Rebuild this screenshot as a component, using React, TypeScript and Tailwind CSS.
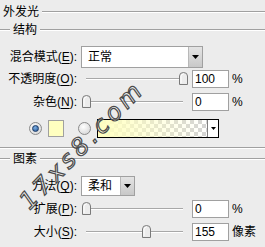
import React from 'react';

const font = "font-['Liberation_Sans','Noto_Sans_CJK_SC',sans-serif]";

function Etched() {
	return (
		<div className="flex-1 flex flex-col">
			<div className="h-px bg-[#a0a0a0]" />
			<div className="h-px bg-white" />
		</div>
	);
}

function GroupTitle({ text, big }: { text: string; big?: boolean }) {
	return (
		<div className={big ? 'h-[24px] flex items-center' : 'h-[12px] flex items-center'}>
			{!big && <div className="w-[10px] flex flex-col"><div className="h-px bg-[#a0a0a0]" /><div className="h-px bg-white" /></div>}
			<span className={big ? 'pl-[3px] pr-[3px]' : 'px-[3px]'}>{text}</span>
			<Etched />
		</div>
	);
}

function Label({ text, k }: { text: string; k: string }) {
	return (
		<span className="w-[77px] text-right whitespace-nowrap shrink-0">
			{text}(<span className="underline underline-offset-2">{k}</span>):
		</span>
	);
}

function DropButton() {
	return (
		<div className="w-[14px] h-full border-l border-[#b8b8b8] bg-[linear-gradient(#e4e4e4,#c8c8c8)] flex items-center justify-center">
			<svg width="7" height="4" viewBox="0 0 7 4">
				<path d="M0 0H7L3.5 4Z" fill="#000" />
			</svg>
		</div>
	);
}

function Select({ value, width }: { value: string; width: string }) {
	return (
		<div className={`${width} h-full ml-[4px] bg-white border border-[#a0a0a0] flex items-stretch`}>
			<span className="flex-1 pl-[6px] flex items-center">{value}</span>
			<DropButton />
		</div>
	);
}

function Slider({ pct }: { pct: number }) {
	return (
		<div className="relative w-[106px] h-full ml-[5px] shrink-0">
			<div className="absolute left-[4px] right-[5px] top-[8px] flex flex-col">
				<div className="h-px bg-[#a8a8a8]" />
				<div className="h-px bg-white" />
			</div>
			<svg
				className="absolute top-[2px]"
				style={{ left: 4 + pct * 97 - 4.5 }}
				width="9"
				height="13"
				viewBox="0 0 9 13"
			>
				<path d="M0.5 12.5V4Q0.5 0.5 4.5 0.5Q8.5 0.5 8.5 4V12.5Z" fill="#ececec" stroke="#7a7a7a" />
				<path d="M2 11V4.5Q2 2 4.5 2" fill="none" stroke="#fff" />
			</svg>
		</div>
	);
}

function NumBox({ value }: { value: string }) {
	return (
		<div className="w-[37px] h-full ml-[4px] bg-white border border-[#a0a0a0] flex items-center pl-[2px] shrink-0">
			{value}
		</div>
	);
}

function SliderRow({ label, k, pct, value, unit, gap }: { label: string; k: string; pct: number; value: string; unit: string; gap: string }) {
	return (
		<div className={`${gap} h-[18px] flex items-center`}>
			<Label text={label} k={k} />
			<Slider pct={pct} />
			<NumBox value={value} />
			<span className="ml-[3px]">{unit}</span>
		</div>
	);
}

function Radio({ on }: { on?: boolean }) {
	return (
		<div className="w-[13px] h-[13px] rounded-full border border-[#8a8a8a] bg-[radial-gradient(circle_at_40%_35%,#ffffff,#d0d0d0)] flex items-center justify-center">
			{on && <div className="w-[7px] h-[7px] rounded-full bg-[radial-gradient(circle_at_40%_35%,#7fb2e5,#1f4f8f)] border border-[#1b3a66]" />}
		</div>
	);
}

export default function App() {
	return (
		<div className={`relative w-[265px] h-[247px] bg-[#ececec] text-[12px] leading-none text-black overflow-hidden ${font}`}>
			<GroupTitle text="外发光" big />
			<GroupTitle text="结构" />

			<div className="mt-[10px] h-[22px] flex items-center">
				<Label text="混合模式" k="E" />
				<Select value="正常" width="w-[122px]" />
			</div>
			<SliderRow gap="mt-[2px]" label="不透明度" k="O" pct={1} value="100" unit="%" />
			<SliderRow gap="mt-[5px]" label="杂色" k="N" pct={0} value="0" unit="%" />

			<div className="mt-[8px] h-[19px] flex items-center">
				<div className="ml-[29px]"><Radio on /></div>
				<div className="ml-[6px] w-[16px] h-[17px] bg-[#ffffc0] border border-[#a0a0a0]" />
				<div className="ml-[14px]"><Radio /></div>
				<div className="ml-[6px] w-[122px] h-full border border-black flex">
					<div className="relative flex-1 bg-[conic-gradient(#d4d4d4_25%,#fff_0_50%,#d4d4d4_0_75%,#fff_0)] bg-[length:8px_8px]">
						<div className="absolute inset-0 bg-[linear-gradient(90deg,#ffffc0,#ffffc000)]" />
					</div>
					<div className="w-[11px] bg-white border-l border-[#808080] flex items-center justify-center">
						<svg width="5" height="3" viewBox="0 0 5 3"><path d="M0 0H5L2.5 3Z" fill="#000" /></svg>
					</div>
				</div>
			</div>

			<div className="mt-[9px] flex"><Etched /></div>
			<div className="mt-[4px]"><GroupTitle text="图素" /></div>

			<div className="mt-[11px] h-[20px] flex items-center">
				<Label text="方法" k="Q" />
				<Select value="柔和" width="w-[54px]" />
			</div>
			<SliderRow gap="mt-[4px]" label="扩展" k="P" pct={0} value="0" unit="%" />
			<SliderRow gap="mt-[5px]" label="大小" k="S" pct={155 / 250} value="155" unit="像素" />

			<span className="absolute left-[-8px] top-[133px] w-[180px] text-center origin-center rotate-[-46deg] italic text-[24px] tracking-[4px] text-white/50 [-webkit-text-stroke:1.2px_#4a4a4a] font-['DejaVu_Sans',sans-serif] pointer-events-none">
				17xs8.com
			</span>
		</div>
	);
}
